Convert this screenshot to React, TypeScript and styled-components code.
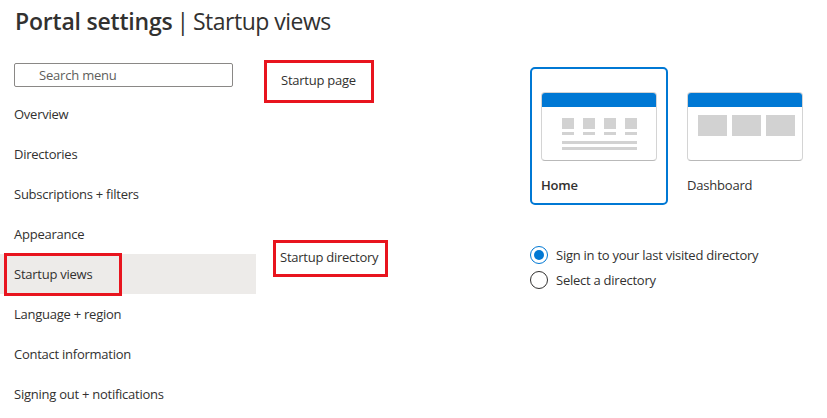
import React from "react";
import styled, { createGlobalStyle, css } from "styled-components";

const Global = createGlobalStyle`
  html, body { margin: 0; padding: 0; background: #ffffff; }
  body {
    font-family: "Open Sans", "Noto Sans", "Liberation Sans", sans-serif;
    color: #323130;
    width: 827px;
    height: 418px;
    overflow: hidden;
  }
  * { box-sizing: border-box; }
`;

const RED = "#e8141e";
const BLUE = "#0078d4";

const Page = styled.div`
  display: flex;
  flex-direction: column;
  width: 827px;
  height: 418px;
`;

const Header = styled.h1`
  margin: 0;
  padding: 6px 15px 0;
  height: 40px;
  font-size: 23px;
  line-height: 30px;
  font-weight: 400;
  letter-spacing: -0.2px;
  color: #323130;
`;

const Strong = styled.span`
  font-weight: 600;
`;

const Sep = styled.span`
  margin: 0 4px 0 4px;
`;

const Light = styled.span`
  letter-spacing: -0.5px;
`;

const Body = styled.div`
  display: flex;
  flex: 1;
`;

const Sidebar = styled.nav`
  width: 256px;
  padding-top: 23px;
  display: flex;
  flex-direction: column;
`;

const Search = styled.div`
  margin-left: 14px;
  width: 219px;
  height: 24px;
  border: 1px solid #8a8886;
  border-radius: 2px;
  padding-left: 24px;
  font-size: 13px;
  line-height: 22px;
  letter-spacing: -0.2px;
  color: #605e5c;
  margin-bottom: 7px;
`;

const MenuItem = styled.div<{ $active?: boolean }>`
  position: relative;
  height: 40px;
  display: flex;
  align-items: center;
  padding-left: 14px;
  font-size: 13px;
  letter-spacing: -0.25px;
  color: #323130;
  ${(p) =>
    p.$active &&
    css`
      background: #edebe9;
    `}
`;

const MarkerBox = styled.span`
  position: absolute;
  left: 4px;
  top: -1px;
  width: 118px;
  height: 43px;
  border: 3px solid ${RED};
  pointer-events: none;
`;

const Content = styled.div`
  flex: 1;
  display: grid;
  grid-template-columns: 266px 1fr;
  grid-template-rows: 173px auto;
  padding-top: 20px;
  padding-left: 8px;
`;

const LabelCell = styled.div<{ $pt: number; $pl: number }>`
  padding-top: ${(p) => p.$pt}px;
  padding-left: ${(p) => p.$pl}px;
`;

const Highlight = styled.span<{ $w: number; $h: number; $pl: number; $pb: number }>`
  display: flex;
  align-items: center;
  width: ${(p) => p.$w}px;
  height: ${(p) => p.$h}px;
  padding-left: ${(p) => p.$pl}px;
  padding-bottom: ${(p) => p.$pb}px;
  border: 3px solid ${RED};
  font-size: 13px;
  letter-spacing: -0.25px;
  color: #323130;
`;

const Cards = styled.div`
  display: flex;
  gap: 8px;
  padding-top: 7px;
`;

const Card = styled.div<{ $selected?: boolean }>`
  width: 138px;
  height: 138px;
  border: 2px solid ${(p) => (p.$selected ? BLUE : "transparent")};
  border-radius: 5px;
  padding: 23px 9px 0;
  display: flex;
  flex-direction: column;
`;

const Preview = styled.div`
  width: 116px;
  height: 69px;
  border: 1px solid #d4d4d4;
  border-bottom-color: #b9b9b9;
  border-radius: 4px;
  overflow: hidden;
  display: flex;
  flex-direction: column;
  background: #fff;
`;

const PreviewBar = styled.div`
  height: 14px;
  background: ${BLUE};
  flex-shrink: 0;
`;

const HomeTiles = styled.div`
  display: flex;
  flex-direction: column;
  padding: 11px 0 0 20px;
`;

const TileRow = styled.div`
  display: flex;
  gap: 9px;
`;

const SmallTile = styled.div`
  display: flex;
  flex-direction: column;
  gap: 3px;
`;

const TileSquare = styled.div<{ $w: number; $h: number }>`
  width: ${(p) => p.$w}px;
  height: ${(p) => p.$h}px;
  background: #d2d2d2;
`;

const TileLine = styled.div<{ $w: number; $mt?: number }>`
  width: ${(p) => p.$w}px;
  height: 3px;
  margin-top: ${(p) => p.$mt ?? 0}px;
  background: #d2d2d2;
`;

const DashTiles = styled.div`
  display: flex;
  gap: 5px;
  padding: 8px 0 0 10px;
`;

const CardLabel = styled.div<{ $bold?: boolean }>`
  margin-top: 15px;
  font-size: 13px;
  letter-spacing: -0.2px;
  font-weight: ${(p) => (p.$bold ? 600 : 400)};
  color: #323130;
`;

const Radios = styled.div`
  display: flex;
  flex-direction: column;
  gap: 7px;
  padding-top: 13px;
`;

const RadioRow = styled.label`
  display: flex;
  align-items: center;
  gap: 8px;
  font-size: 13px;
  letter-spacing: -0.25px;
  height: 18px;
  color: #323130;
`;

const RadioCircle = styled.span<{ $checked?: boolean }>`
  width: 18px;
  height: 18px;
  border-radius: 50%;
  border: 1px solid ${(p) => (p.$checked ? BLUE : "#323130")};
  display: flex;
  align-items: center;
  justify-content: center;
  flex-shrink: 0;
  &::after {
    content: "";
    width: 10px;
    height: 10px;
    border-radius: 50%;
    background: ${(p) => (p.$checked ? BLUE : "transparent")};
  }
`;

const menu = [
  "Overview",
  "Directories",
  "Subscriptions + filters",
  "Appearance",
  "Startup views",
  "Language + region",
  "Contact information",
  "Signing out + notifications",
];

export default function App() {
  return (
    <Page>
      <Global />
      <Header>
        <Strong>Portal settings</Strong>
        <Sep>|</Sep>
        <Light>Startup views</Light>
      </Header>
      <Body>
        <Sidebar>
          <Search>Search menu</Search>
          {menu.map((m) => (
            <MenuItem key={m} $active={m === "Startup views"}>
              {m}
              {m === "Startup views" && <MarkerBox />}
            </MenuItem>
          ))}
        </Sidebar>
        <Content>
          <LabelCell $pt={0} $pl={0}>
            <Highlight $w={110} $h={43} $pl={14} $pb={4}>
              Startup page
            </Highlight>
          </LabelCell>
          <Cards>
            <Card $selected>
              <Preview>
                <PreviewBar />
                <HomeTiles>
                  <TileRow>
                    {[0, 1, 2, 3].map((i) => (
                      <SmallTile key={i}>
                        <TileSquare $w={12} $h={11} />
                        <TileLine $w={12} />
                      </SmallTile>
                    ))}
                  </TileRow>
                  <TileLine $w={75} $mt={6} />
                  <TileLine $w={75} $mt={3} />
                </HomeTiles>
              </Preview>
              <CardLabel $bold>Home</CardLabel>
            </Card>
            <Card>
              <Preview>
                <PreviewBar />
                <DashTiles>
                  <TileSquare $w={29} $h={21} />
                  <TileSquare $w={29} $h={21} />
                  <TileSquare $w={29} $h={21} />
                </DashTiles>
              </Preview>
              <CardLabel>Dashboard</CardLabel>
            </Card>
          </Cards>
          <LabelCell $pt={7} $pl={9}>
            <Highlight $w={115} $h={37} $pl={4} $pb={3}>
              Startup directory
            </Highlight>
          </LabelCell>
          <Radios>
            <RadioRow>
              <RadioCircle $checked />
              Sign in to your last visited directory
            </RadioRow>
            <RadioRow>
              <RadioCircle />
              Select a directory
            </RadioRow>
          </Radios>
        </Content>
      </Body>
    </Page>
  );
}
